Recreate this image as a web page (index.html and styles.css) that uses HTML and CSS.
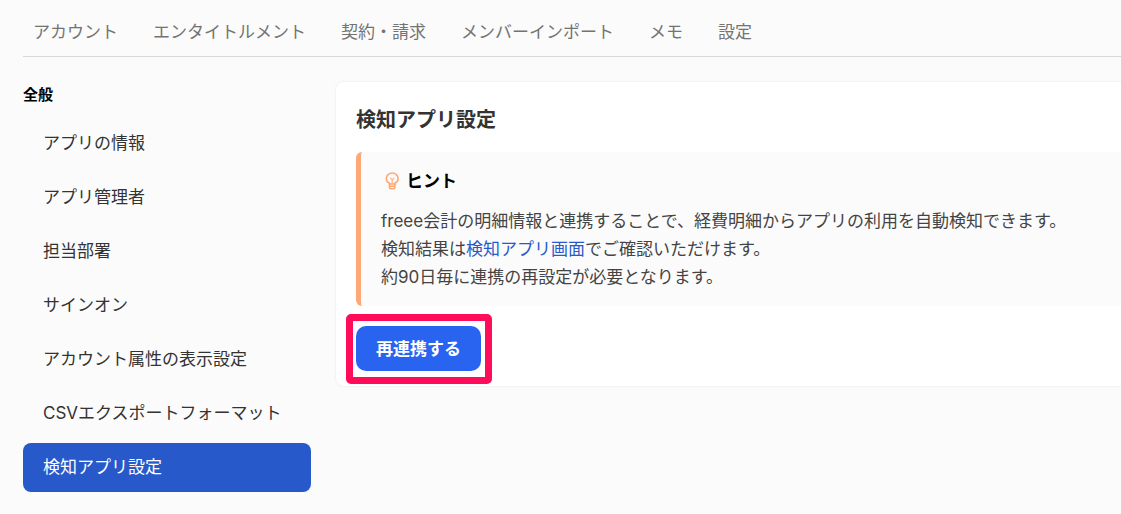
FILE: index.html
```html
<!DOCTYPE html>
<html lang="ja">
<head>
    <meta charset="UTF-8">
    <meta name="viewport" content="width=device-width, initial-scale=1.0">
    <title>検知アプリ設定</title>
    <link rel="stylesheet" href="styles.css">
</head>
<body>
    <nav class="tabs">
        <a href="#">アカウント</a>
        <a href="#">エンタイトルメント</a>
        <a href="#">契約・請求</a>
        <a href="#">メンバーインポート</a>
        <a href="#">メモ</a>
        <a href="#">設定</a>
    </nav>

    <div class="container">
        <aside class="sidebar">
            <h2 class="sidebar-title">全般</h2>
            <ul class="menu">
                <li><a href="#">アプリの情報</a></li>
                <li><a href="#">アプリ管理者</a></li>
                <li><a href="#">担当部署</a></li>
                <li><a href="#">サインオン</a></li>
                <li><a href="#">アカウント属性の表示設定</a></li>
                <li><a href="#">CSVエクスポートフォーマット</a></li>
                <li><a href="#" class="active">検知アプリ設定</a></li>
            </ul>
        </aside>

        <main class="panel">
            <h1 class="panel-title">検知アプリ設定</h1>
            <div class="hint">
                <h3 class="hint-title">
                    <svg class="hint-icon" width="15" height="18" viewBox="0 0 15 18" fill="none" stroke="currentColor" stroke-width="1.6">
                        <path d="M4.500 12v-.8C2.600 10.200 1.300 8.700 1.300 6.700a5.900 5.700 0 0 1 11.800 0c0 2-1.300 3.500-3.200 4.500v.8z"/>
                        <path d="M4.500 12v3.200c0 1 .5 1.500 1.400 1.500h2.600c.9 0 1.400-.5 1.400-1.500V12M4.500 14.300h5.400"/>
                        <path d="M5.200 5.800l2 2 2-2M7.200 7.800v3.700" stroke-width="1.100"/>
                    </svg>
                    ヒント
                </h3>
                <p class="hint-text">
                    freee会計の明細情報と連携することで、経費明細からアプリの利用を自動検知できます。<br>
                    検知結果は<a href="#">検知アプリ画面</a>でご確認いただけます。<br>
                    約90日毎に連携の再設定が必要となります。
                </p>
            </div>
            <div class="highlight">
                <button type="button" class="btn">再連携する</button>
            </div>
        </main>
    </div>
</body>
</html>
```
FILE: styles.css
```css
*{
    box-sizing: border-box;
}
body{
    margin: 0;
    padding-left: 23px;
    background-color: #fbfbfb;
    color: #333;
    font-family: Inter, "Noto Sans CJK JP", sans-serif;
    font-size: 17px;
    line-height: 28px;
}
h1, h2, h3, p, ul{
    margin: 0;
    padding: 0;
}
a{
    text-decoration: none;
}

/* 上部タブ */
.tabs{
    display: flex;
    gap: 35px;
    padding: 18px 10px 10px;
    border-bottom: 1px solid #d9d9d9;
    white-space: nowrap;
}
.tabs a{
    color: #737373;
}

.container{
    display: flex;
    align-items: flex-start;
    gap: 25px;
}

/* サイドバー */
.sidebar{
    flex: 0 0 288px;
    padding: 24px 0;
}
.sidebar-title{
    margin-bottom: 10px;
    color: #000;
    font-size: 15px;
}
.menu{
    display: flex;
    flex-direction: column;
    gap: 5px;
    list-style: none;
}
.menu a{
    display: block;
    padding: 10px 20px 11px;
    border-radius: 8px;
    color: #333;
}
.menu .active{
    background-color: #2759ca;
    color: #fff;
}

/* メイン */
.panel{
    flex: 1;
    margin-top: 25px;
    padding: 23px 0 15px 20px;
    background-color: #fff;
    border-radius: 8px 0 0 8px;
    box-shadow: 0 0 3px rgba(0, 0, 0, 0.08);
}
.panel-title{
    margin-bottom: 17px;
    font-size: 20px;
    line-height: 30px;
}
.hint{
    padding: 15px 20px;
    background-color: #fbfbfb;
    border-left: 5px solid #ffa877;
    border-radius: 6px 0 0 6px;
}
.hint-title{
    display: flex;
    align-items: center;
    gap: 6px;
    margin-bottom: 12px;
    padding-left: 4px;
    color: #000;
    font-size: 17px;
}
.hint-icon{
    color: #ffa877;
}
.hint-text{
    color: #444;
}
.hint-text a{
    color: #2759ca;
}

.highlight{
    position: relative;
    width: fit-content;
    margin-top: 20px;
}
.highlight::after{
    content: "";
    position: absolute;
    inset: -12px -11px -13px -10px;
    border: 7px solid #ff0c5b;
    border-radius: 5px;
    pointer-events: none;
}
.btn{
    display: block;
    padding: 9px 20px 8px;
    border: none;
    border-radius: 10px;
    background-color: #2864f0;
    color: #fff;
    font-family: inherit;
    font-size: 17px;
    font-weight: bold;
    line-height: 28px;
    cursor: pointer;
}
```
